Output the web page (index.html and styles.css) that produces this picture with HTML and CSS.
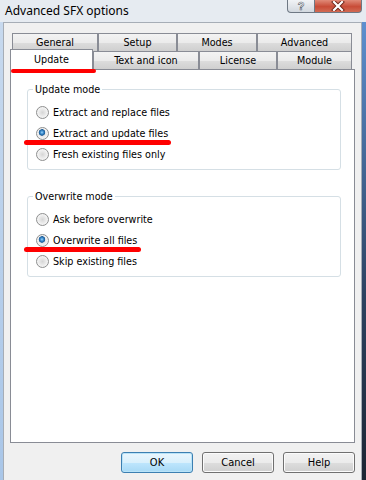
FILE: index.html
```html
<!DOCTYPE html>
<html lang="en">
<head>
  <meta charset="UTF-8">
  <meta name="viewport" content="width=device-width, initial-scale=1.0">
  <title>Advanced SFX options</title>
  <link rel="stylesheet" href="styles.css">
</head>
<body>
  <div class="window">
    <div class="titlebar">
      <span class="title">Advanced SFX options</span>
      <div class="caption-buttons">
        <button class="cap-help">?</button>
        <button class="cap-close">
          <svg width="14" height="10" viewBox="0 0 14 10">
            <path d="M3 1 L11 9 M11 1 L3 9" stroke="#6b2418" stroke-width="4" stroke-linecap="square"/>
            <path d="M3 1 L11 9 M11 1 L3 9" stroke="#ffffff" stroke-width="2.2" stroke-linecap="square"/>
          </svg>
        </button>
      </div>
    </div>

    <div class="frame">
      <div class="frame-left"></div>
      <div class="client">
        <div class="tabs">
          <div class="tab-row">
            <div class="tab w-general">General</div>
            <div class="tab w-setup">Setup</div>
            <div class="tab w-modes">Modes</div>
            <div class="tab w-advanced">Advanced</div>
          </div>
          <div class="tab-row">
            <div class="tab selected w-update">Update<span class="mark mark-tab"></span></div>
            <div class="tab w-text">Text and icon</div>
            <div class="tab w-license">License</div>
            <div class="tab w-module">Module</div>
          </div>

          <div class="panel">
            <fieldset class="group">
              <legend>Update mode</legend>
              <label class="option"><input type="radio" name="update"> Extract and replace files</label>
              <label class="option"><input type="radio" name="update" checked> Extract and update files<span class="mark mark-update"></span></label>
              <label class="option"><input type="radio" name="update"> Fresh existing files only</label>
            </fieldset>

            <fieldset class="group">
              <legend>Overwrite mode</legend>
              <label class="option"><input type="radio" name="overwrite"> Ask before overwrite</label>
              <label class="option"><input type="radio" name="overwrite" checked> Overwrite all files<span class="mark mark-overwrite"></span></label>
              <label class="option"><input type="radio" name="overwrite"> Skip existing files</label>
            </fieldset>
          </div>
        </div>

        <div class="buttons">
          <button class="btn default">OK</button>
          <button class="btn">Cancel</button>
          <button class="btn">Help</button>
        </div>
      </div>
      <div class="frame-right"></div>
    </div>
  </div>
</body>
</html>
```

FILE: styles.css
```css
body {
  margin: 0;
  font-family: Tahoma, "DejaVu Sans Condensed", "Liberation Sans", sans-serif;
  font-size: 10.7px;
  color: #000000;
}
.window {
  width: 366px;
  height: 480px;
  display: flex;
  flex-direction: column;
  background: #e6ebf1;
  overflow: hidden;
}
.titlebar {
  height: 22px;
  display: flex;
  justify-content: space-between;
  align-items: flex-start;
  flex-shrink: 0;
}
.title {
  font-family: "Noto Sans", "Liberation Sans", sans-serif;
  font-size: 12px;
  line-height: 15px;
  padding: 3px 0 0 5px;
}
.caption-buttons {
  display: flex;
  margin-right: 4px;
}
.caption-buttons button {
  height: 13px;
  padding: 0;
  border: 1px solid #6e7884;
  border-top: none;
  display: flex;
  justify-content: center;
  align-items: center;
}
.cap-help {
  width: 28px;
  border-radius: 0 0 0 4px;
  background: linear-gradient(to bottom, #f1f3f6, #d2d8df);
  font-family: "Liberation Sans", sans-serif;
  font-size: 11px;
  font-weight: bold;
  color: #ffffff;
  -webkit-text-stroke: 0.6px #59626d;
  line-height: 12px;
}
.cap-close {
  width: 47px;
  border-radius: 0 0 4px 0;
  border-left: none !important;
  background: linear-gradient(to bottom, #e08a78, #c84c37 55%, #d26b54);
}
.frame {
  flex: 1;
  display: flex;
}
.frame-left {
  width: 3px;
  background: linear-gradient(to bottom, #c7d9ee, #a9c6e8);
}
.frame-right {
  width: 4px;
  background: linear-gradient(to bottom, #5d8fcf, #2c4260 60%, #1c2533);
}
.client {
  flex: 1;
  background: #f0f0f0;
  border: 1px solid #a6adb6;
  border-bottom: none;
}
.tabs {
  margin: 10px 6px 0 6px;
}
.tab-row {
  display: flex;
  align-items: flex-start;
  height: 18px;
  padding-left: 2px;
}
.tab {
  box-sizing: border-box;
  height: 18px;
  border: 1px solid #898c95;
  border-bottom: none;
  background: linear-gradient(to bottom, #f3f3f3, #ebebeb 50%, #dddddd 51%, #cfcfcf);
  text-align: center;
  line-height: 17px;
}
.tab.selected {
  position: relative;
  z-index: 1;
  height: 21px;
  margin: -2px 0 0 -2px;
  background: #ffffff;
  line-height: 19px;
}
.w-general { width: 86px; }
.w-setup { width: 79px; }
.w-modes { width: 80px; }
.w-advanced { width: 95px; }
.w-update { width: 83px; }
.w-text { width: 106px; }
.w-license { width: 78px; }
.w-module { width: 75px; }

.panel {
  box-sizing: border-box;
  height: 374px;
  background: #ffffff;
  border: 1px solid #898c95;
  padding: 13px 13px 0 16px;
}
.group {
  margin: 0 0 20px 0;
  padding: 6px 8px 4px 5px;
  border: 1px solid #d5dfe5;
  border-radius: 3px;
}
.group legend {
  padding: 0 2px;
  line-height: 13px;
}
.option {
  position: relative;
  display: flex;
  align-items: center;
  gap: 4px;
  height: 21px;
  margin-left: 3px;
}
.option input {
  appearance: none;
  -webkit-appearance: none;
  width: 13px;
  height: 13px;
  margin: 0;
  border: 1px solid #8e8f8f;
  border-radius: 50%;
  background: radial-gradient(circle at 50% 50%, #d6d6d6 0, #e8e8e8 3px, #f7f7f7 6px);
  box-shadow: inset 0 0 0 1px #f2f2f2;
}
.option input:checked {
  background:
    radial-gradient(circle at 45% 40%, #9fd6fb 0, #3f8fd0 1.5px, #1b5b96 3px, transparent 3.6px),
    radial-gradient(circle at 50% 50%, #d6d6d6 0, #e8e8e8 3px, #f7f7f7 6px);
}
.mark {
  position: absolute;
  height: 5px;
  border-radius: 3px;
  background: #ff0000;
}
.mark-tab {
  left: 0;
  top: 19px;
  width: 85px;
  height: 4px;
}
.mark-update {
  left: -12px;
  top: 17px;
  width: 147px;
}
.mark-overwrite {
  left: -12px;
  top: 17px;
  width: 117px;
}

.buttons {
  display: flex;
  justify-content: flex-end;
  gap: 9px;
  margin: 9px 6px 0 6px;
}
.btn {
  width: 72px;
  height: 21px;
  padding: 0;
  border: 1px solid #707070;
  border-radius: 3px;
  background: linear-gradient(to bottom, #f2f2f2, #ebebeb 50%, #dddddd 51%, #cfcfcf);
  box-shadow: inset 0 0 0 1px #fbfbfb;
  font-family: inherit;
  font-size: 11px;
  color: #000000;
}
.btn.default {
  border-color: #3c7fb1;
  background: linear-gradient(to bottom, #eaf6fd, #d9f0fc 50%, #bee6fd 51%, #a7d9f5);
  box-shadow: inset 0 0 0 1px #b9e3f8;
}
```
